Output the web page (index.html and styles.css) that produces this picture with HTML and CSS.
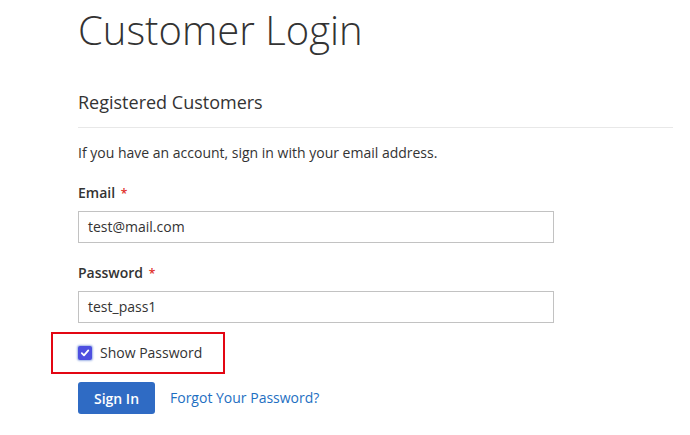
FILE: index.html
```html
<!DOCTYPE html>
<html>
<head>
<meta charset="utf-8">
<link rel="stylesheet" href="styles.css">
</head>
<body>
<main class="page">
  <h1 class="title">Customer Login</h1>
  <section class="block">
    <h2 class="block-title">Registered Customers</h2>
    <p class="intro">If you have an account, sign in with your email address.</p>
    <div class="field">
      <label class="label">Email <span class="req">*</span></label>
      <div class="input">test@mail.com</div>
    </div>
    <div class="field">
      <label class="label">Password <span class="req">*</span></label>
      <div class="input">test_pass1</div>
    </div>
    <div class="show-wrap">
      <div class="show">
        <span class="check">
          <svg width="10" height="10" viewBox="0 0 10 10"><path d="M1.8 5.2 L4 7.4 L8.3 2.4" fill="none" stroke="#fff" stroke-width="1.8" stroke-linecap="round" stroke-linejoin="round"/></svg>
        </span>
        <span class="show-label">Show Password</span>
      </div>
    </div>
    <div class="actions">
      <button class="btn">Sign In</button>
      <a class="link" href="#">Forgot Your Password?</a>
    </div>
  </section>
</main>
</body>
</html>
```
FILE: styles.css
```css
html, body {
  margin: 0;
  padding: 0;
  background: #fff;
}
body {
  font-family: "Open Sans", "Liberation Sans", sans-serif;
  color: #333;
  font-size: 14px;
}
.page {
  padding: 0 17px 0 78px;
}
.title {
  margin: 0;
  padding-top: 4px;
  font-size: 40px;
  font-weight: 300;
  line-height: 52px;
  color: #333;
}
.block-title {
  margin: 34px 0 0;
  font-size: 18px;
  font-weight: 400;
  line-height: 24px;
  padding-bottom: 13px;
  border-bottom: 1px solid #e8e8e8;
}
.intro {
  margin: 15px 0 0;
  line-height: 20px;
}
.field {
  margin-top: 20px;
}
.label {
  display: block;
  font-weight: 600;
  line-height: 20px;
}
.req {
  color: #e02b27;
  font-size: 12px;
  margin-left: 2px;
}
.input {
  margin-top: 7px;
  width: 476px;
  height: 32px;
  box-sizing: border-box;
  border: 1px solid #c2c2c2;
  padding: 0 9px;
  line-height: 30px;
  font-size: 14px;
}
.show-wrap {
  margin: 9px 0 0 -27px;
}
.show {
  display: inline-flex;
  align-items: center;
  gap: 8px;
  width: 174px;
  height: 42px;
  box-sizing: border-box;
  border: 2px solid #e30613;
  padding-left: 25px;
}
.check {
  width: 14px;
  height: 14px;
  box-sizing: border-box;
  background: #4d4fe0;
  border-radius: 2px;
  display: flex;
  align-items: center;
  justify-content: center;
  box-shadow: 0 0 2px 1px #9fb3e6;
}
.show-label {
  line-height: 20px;
}
.actions {
  margin-top: 8px;
  display: flex;
  align-items: center;
  gap: 15px;
}
.btn {
  width: 77px;
  height: 32px;
  border: none;
  border-radius: 3px;
  background: #2f6bc4;
  color: #fff;
  font-family: "Open Sans", "Liberation Sans", sans-serif;
  font-size: 14px;
  font-weight: 600;
  padding: 0;
}
.link {
  color: #1e6fc2;
  text-decoration: none;
  line-height: 20px;
}
```
